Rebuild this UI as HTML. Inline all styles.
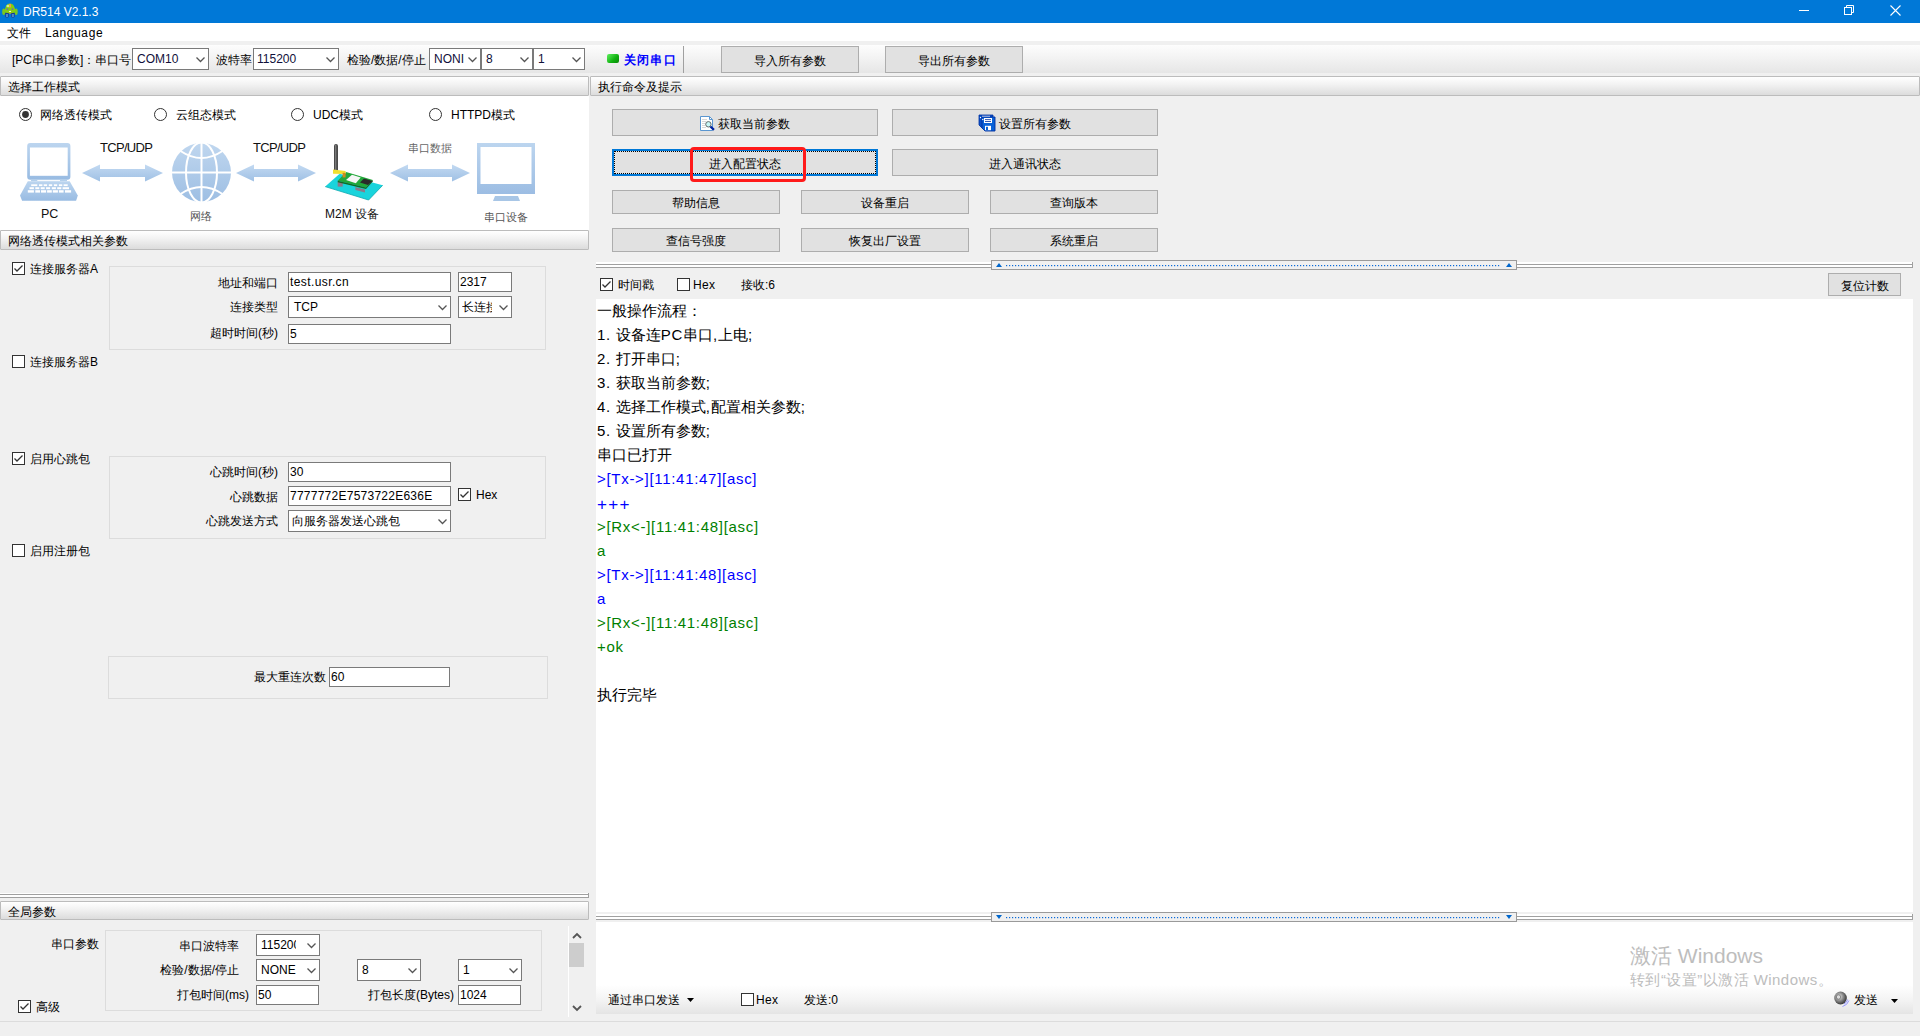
<!DOCTYPE html>
<html><head><meta charset="utf-8"><style>
html,body{margin:0;padding:0;width:1920px;height:1036px;overflow:hidden;background:#f0f0f0;}
body>div{position:absolute;box-sizing:border-box;}
.t{white-space:nowrap;font-family:"Liberation Sans",sans-serif;}
</style></head><body>
<div style="left:0px;top:0px;width:1920px;height:23px;background:#0078d7;"></div>
<svg style="position:absolute;left:0px;top:0px" width="22" height="22" viewBox="0 0 22 22">
<ellipse cx="3.7" cy="11.7" rx="1.5" ry="3.2" fill="#7ac820"/>
<ellipse cx="16.2" cy="11.7" rx="1.5" ry="3.2" fill="#7ac820"/>
<rect x="5.3" y="12.3" width="3.4" height="5.3" rx="1" fill="#1a3a90"/>
<rect x="11.2" y="12.3" width="3.4" height="5.3" rx="1" fill="#1a3a90"/>
<rect x="6" y="14" width="2" height="3" fill="#4a88c8"/><rect x="11.9" y="14" width="2" height="3" fill="#4a88c8"/>
<path d="M4.8 12.5 Q4.8 3.6 10 3.6 Q15.2 3.6 15.2 12.5 Q10 13.8 4.8 12.5 Z" fill="#84cc10"/>
<ellipse cx="8" cy="6" rx="1.6" ry="1.2" fill="#c8ec90"/>
<rect x="9.1" y="3.8" width="1.9" height="3.8" rx="0.9" fill="#f0a040"/>
<circle cx="7.4" cy="9.1" r="0.95" fill="#7060c0"/><circle cx="12.5" cy="9.1" r="0.95" fill="#7060c0"/>
<ellipse cx="10" cy="11.4" rx="1.1" ry="0.6" fill="#f0f0f0"/>
<rect x="9.2" y="12.4" width="1.6" height="1.4" fill="#d0a020"/>
</svg>
<div class="t" style="left:23px;top:6px;font-size:12px;line-height:12px;color:#fff;">DR514 V2.1.3</div>
<div style="left:1799px;top:10px;width:10px;height:1px;background:#fff;"></div>
<svg style="position:absolute;left:1844px;top:5px" width="11" height="11"><rect x="0.5" y="2.5" width="7" height="7" fill="none" stroke="#fff"/><path d="M2.5 2.5 V0.5 H9.5 V7.5 H7.5" fill="none" stroke="#fff"/></svg>
<svg style="position:absolute;left:1890px;top:5px" width="11" height="11"><path d="M0.5 0.5 L10.5 10.5 M10.5 0.5 L0.5 10.5" stroke="#fff" stroke-width="1.1"/></svg>
<div style="left:0px;top:23px;width:1920px;height:18px;background:#fff;"></div>
<div class="t" style="left:7px;top:27px;font-size:12px;line-height:12px;color:#000;">文件</div>
<div class="t" style="left:45px;top:27px;font-size:12px;line-height:12px;color:#000;letter-spacing:0.6px;">Language</div>
<div style="left:0px;top:41px;width:1920px;height:35px;background:#f0f0f0;"></div>
<div style="left:0px;top:45px;width:1920px;height:28px;background:linear-gradient(#fdfdfd,#f3f3f3 45%,#e6e6e6);"></div>
<div class="t" style="left:12px;top:54px;font-size:12px;line-height:12px;color:#000;">[PC串口参数]：串口号</div>
<div style="left:132px;top:48px;width:77px;height:22px;background:#fff;border:1px solid #7a7a7a;"></div>
<div class="t" style="left:137px;top:53px;font-size:12px;line-height:12px;color:#000;color:#10103a;">COM10</div>
<svg style="position:absolute;left:196px;top:57px" width="9" height="6"><path d="M0.5 0.5 L4.5 4.5 L8.5 0.5" fill="none" stroke="#555" stroke-width="1.25"/></svg>
<div class="t" style="left:216px;top:54px;font-size:12px;line-height:12px;color:#000;">波特率</div>
<div style="left:253px;top:48px;width:86px;height:22px;background:#fff;border:1px solid #7a7a7a;"></div>
<div class="t" style="left:257px;top:53px;font-size:12px;line-height:12px;color:#000;color:#10103a;">115200</div>
<svg style="position:absolute;left:326px;top:57px" width="9" height="6"><path d="M0.5 0.5 L4.5 4.5 L8.5 0.5" fill="none" stroke="#555" stroke-width="1.25"/></svg>
<div class="t" style="left:347px;top:54px;font-size:12px;line-height:12px;color:#000;">检验/数据/停止</div>
<div style="left:429px;top:48px;width:52px;height:22px;background:#fff;border:1px solid #7a7a7a;"></div>
<div class="t" style="left:434px;top:53px;font-size:12px;line-height:12px;color:#000;color:#10103a;">NONI</div>
<svg style="position:absolute;left:468px;top:57px" width="9" height="6"><path d="M0.5 0.5 L4.5 4.5 L8.5 0.5" fill="none" stroke="#555" stroke-width="1.25"/></svg>
<div style="left:481px;top:48px;width:52px;height:22px;background:#fff;border:1px solid #7a7a7a;"></div>
<div class="t" style="left:486px;top:53px;font-size:12px;line-height:12px;color:#000;color:#10103a;">8</div>
<svg style="position:absolute;left:520px;top:57px" width="9" height="6"><path d="M0.5 0.5 L4.5 4.5 L8.5 0.5" fill="none" stroke="#555" stroke-width="1.25"/></svg>
<div style="left:533px;top:48px;width:52px;height:22px;background:#fff;border:1px solid #7a7a7a;"></div>
<div class="t" style="left:538px;top:53px;font-size:12px;line-height:12px;color:#000;color:#10103a;">1</div>
<svg style="position:absolute;left:572px;top:57px" width="9" height="6"><path d="M0.5 0.5 L4.5 4.5 L8.5 0.5" fill="none" stroke="#555" stroke-width="1.25"/></svg>
<div style="left:607px;top:54px;width:12px;height:9px;border-radius:2px;background:linear-gradient(135deg,#5ff05f,#10b010 60%,#0a8a0a);"></div>
<div class="t" style="left:624px;top:54px;font-size:12px;line-height:12px;color:#0000ff;font-weight:bold;letter-spacing:1.2px;">关闭串口</div>
<div style="left:683px;top:46px;width:1px;height:27px;background:#a0a0a0;"></div>
<div style="left:721px;top:46px;width:138px;height:27px;background:#e1e1e1;border:1px solid #adadad;"></div>
<div class="t" style="left:721px;width:138px;top:55px;font-size:12px;line-height:12px;color:#000;text-align:center;">导入所有参数</div>
<div style="left:885px;top:46px;width:138px;height:27px;background:#e1e1e1;border:1px solid #adadad;"></div>
<div class="t" style="left:885px;width:138px;top:55px;font-size:12px;line-height:12px;color:#000;text-align:center;">导出所有参数</div>
<div style="left:0px;top:76px;width:589px;height:20px;border:1px solid #bcbcbc;border-radius:1px;background:linear-gradient(#ffffff,#f3f3f3 40%,#dcdcdc);"></div>
<div class="t" style="left:8px;top:81px;font-size:12px;line-height:12px;color:#000;">选择工作模式</div>
<div style="left:0px;top:96px;width:589px;height:134px;background:#fff;"></div>
<svg style="position:absolute;left:19px;top:108px" width="14" height="14"><circle cx="6.5" cy="6.5" r="6" fill="#fff" stroke="#333" stroke-width="1"/><circle cx="6.5" cy="6.5" r="3.4" fill="#333"/></svg>
<div class="t" style="left:40px;top:109px;font-size:12px;line-height:12px;color:#000;">网络透传模式</div>
<svg style="position:absolute;left:154px;top:108px" width="14" height="14"><circle cx="6.5" cy="6.5" r="6" fill="#fff" stroke="#333" stroke-width="1"/></svg>
<div class="t" style="left:176px;top:109px;font-size:12px;line-height:12px;color:#000;">云组态模式</div>
<svg style="position:absolute;left:291px;top:108px" width="14" height="14"><circle cx="6.5" cy="6.5" r="6" fill="#fff" stroke="#333" stroke-width="1"/></svg>
<div class="t" style="left:313px;top:109px;font-size:12px;line-height:12px;color:#000;">UDC模式</div>
<svg style="position:absolute;left:429px;top:108px" width="14" height="14"><circle cx="6.5" cy="6.5" r="6" fill="#fff" stroke="#333" stroke-width="1"/></svg>
<div class="t" style="left:451px;top:109px;font-size:12px;line-height:12px;color:#000;">HTTPD模式</div>
<svg style="position:absolute;left:20px;top:143px" width="59" height="59" viewBox="0 0 59 59">
<defs><linearGradient id="lg" x1="0" y1="0" x2="0" y2="1"><stop offset="0" stop-color="#bcd5ef"/><stop offset="1" stop-color="#98bbe2"/></linearGradient></defs>
<rect x="7.2" y="0" width="43.2" height="36.8" rx="3" fill="url(#lg)"/>
<rect x="9.9" y="4.5" width="37.8" height="28.3" fill="#fff"/>
<rect x="11" y="36.8" width="36" height="1.4" fill="#b4d0ec"/>
<rect x="17.3" y="37" width="22.7" height="0.9" fill="#fff"/>
<path d="M7.8 38.2 L49.7 38.2 L57.8 52.4 L56.1 57.8 L2.1 57.8 L0 52.4 Z" fill="url(#lg)"/>
<g fill="#fff"><rect x="11.2" y="41.3" width="6.1" height="1.8"/><rect x="19" y="41.3" width="3.4" height="1.8"/><rect x="23.7" y="41.3" width="3.4" height="1.8"/><rect x="28.8" y="41.3" width="3.4" height="1.8"/><rect x="33.9" y="41.3" width="3.3" height="1.8"/><rect x="38.9" y="41.3" width="3.4" height="1.8"/><rect x="43.6" y="41.3" width="4.1" height="1.8"/><rect x="9.5" y="44.2" width="4.4" height="2.0"/><rect x="15.3" y="44.2" width="4.0" height="2.0"/><rect x="20.7" y="44.2" width="4.0" height="2.0"/><rect x="26.1" y="44.2" width="4.0" height="2.0"/><rect x="31.8" y="44.2" width="4.1" height="2.0"/><rect x="37.2" y="44.2" width="4.1" height="2.0"/><rect x="42.6" y="44.2" width="6.4" height="2.0"/><rect x="7.8" y="47.2" width="6.1" height="2.4"/><rect x="15.3" y="47.2" width="4.7" height="2.4"/><rect x="21" y="47.2" width="5.1" height="2.4"/><rect x="27.1" y="47.2" width="4.7" height="2.4"/><rect x="32.8" y="47.2" width="5.1" height="2.4"/><rect x="38.9" y="47.2" width="4.7" height="2.4"/><rect x="45" y="47.2" width="6.1" height="2.4"/></g></svg>
<div class="t" style="left:41px;top:208px;font-size:12.5px;line-height:12.5px;color:#111;">PC</div>
<svg style="position:absolute;left:82px;top:164px" width="81" height="18" viewBox="0 0 81 18"><defs><linearGradient id="ag" x1="0" y1="0" x2="0" y2="1"><stop offset="0" stop-color="#c3daf2"/><stop offset="1" stop-color="#9fc0e4"/></linearGradient></defs><path d="M0 9 L18 0.5 L18 5 L63 5 L63 0.5 L81 9 L63 17.5 L63 13 L18 13 L18 17.5 Z" fill="url(#ag)"/></svg>
<div class="t" style="left:100px;top:141px;font-size:13px;line-height:13px;color:#111;letter-spacing:-0.7px;">TCP/UDP</div>
<svg style="position:absolute;left:171px;top:142px" width="61" height="61" viewBox="0 0 61 61">
<defs><linearGradient id="gg" x1="0" y1="0" x2="0" y2="1"><stop offset="0" stop-color="#c0d7ef"/><stop offset="1" stop-color="#9dbee3"/></linearGradient></defs>
<circle cx="30.5" cy="30.5" r="29.5" fill="url(#gg)"/>
<g fill="none" stroke="#fff" stroke-width="2">
<ellipse cx="30.5" cy="30.5" rx="15.5" ry="30"/>
<line x1="30.5" y1="0" x2="30.5" y2="61"/>
<line x1="0" y1="30.5" x2="61" y2="30.5"/>
<path d="M9.5 9 Q30.5 23 51.5 9"/>
<path d="M9.5 52 Q30.5 38 51.5 52"/>
</g></svg>
<div class="t" style="left:190px;top:211px;font-size:11px;line-height:11px;color:#555;-webkit-text-stroke-width:0;">网络</div>
<svg style="position:absolute;left:236px;top:164px" width="80" height="18" viewBox="0 0 80 18"><defs><linearGradient id="ag" x1="0" y1="0" x2="0" y2="1"><stop offset="0" stop-color="#c3daf2"/><stop offset="1" stop-color="#9fc0e4"/></linearGradient></defs><path d="M0 9 L18 0.5 L18 5 L62 5 L62 0.5 L80 9 L62 17.5 L62 13 L18 13 L18 17.5 Z" fill="url(#ag)"/></svg>
<div class="t" style="left:253px;top:141px;font-size:13px;line-height:13px;color:#111;letter-spacing:-0.7px;">TCP/UDP</div>
<svg style="position:absolute;left:322px;top:142px" width="64" height="62" viewBox="0 0 64 62">
<path d="M3.2 44.6 L46.6 58 L60.7 43.3 L17.7 31.8 Z" fill="#19d4dc"/>
<path d="M3.2 44.6 L46.6 58 L60.7 43.3" fill="none" stroke="#0aa8b0" stroke-width="0.8"/>
<rect x="15.7" y="40" width="5" height="4.6" fill="#8a7a8a"/>
<path d="M33.4 45 L43 47.5 L43 50.5 L33.4 48 Z" fill="#8a7a8a"/>
<path d="M15.7 38.7 L24.2 30.1 L50.8 38 L44 45.5 Z" fill="#22a83a"/>
<path d="M15.7 38.7 L44 45.5 L50.8 38 L50.8 39.5 L44 47 L15.7 40.2 Z" fill="#126a22"/>
<path d="M24 38 L30 32.8 L38.7 35.4 L33.8 41.3 Z" fill="#f6f6f6"/>
<path d="M38 40.5 L42 36.4 L50.5 39 L46 43 Z" fill="#2a2a2a"/>
<rect x="12" y="2" width="4" height="28" rx="2" fill="#4a4a4a"/>
<rect x="13" y="3" width="1.3" height="25" fill="#7a7a7a"/>
<path d="M11 27.5 L23.6 29 L23.6 32 L11 31.8 Z" fill="#f0e030"/>
<rect x="20.6" y="30.8" width="3" height="4.6" fill="#d08a20"/>
</svg>
<div class="t" style="left:325px;top:208px;font-size:12px;line-height:12px;color:#111;">M2M 设备</div>
<svg style="position:absolute;left:390px;top:164px" width="80" height="18" viewBox="0 0 80 18"><defs><linearGradient id="ag" x1="0" y1="0" x2="0" y2="1"><stop offset="0" stop-color="#c3daf2"/><stop offset="1" stop-color="#9fc0e4"/></linearGradient></defs><path d="M0 9 L18 0.5 L18 5 L62 5 L62 0.5 L80 9 L62 17.5 L62 13 L18 13 L18 17.5 Z" fill="url(#ag)"/></svg>
<div class="t" style="left:408px;top:143px;font-size:11px;line-height:11px;color:#666;-webkit-text-stroke-width:0;">串口数据</div>
<svg style="position:absolute;left:477px;top:143px" width="59" height="59" viewBox="0 0 59 59">
<defs><linearGradient id="mg" x1="0" y1="0" x2="0" y2="1"><stop offset="0" stop-color="#bcd5ef"/><stop offset="1" stop-color="#9cbde3"/></linearGradient></defs>
<rect x="0" y="0" width="58" height="51" fill="url(#mg)"/>
<rect x="3.5" y="4" width="51" height="37" fill="#fff"/>
<path d="M18 53 L41 53 L43 58 L16 58 Z" fill="#a8c6e6"/>
</svg>
<div class="t" style="left:484px;top:212px;font-size:11px;line-height:11px;color:#555;-webkit-text-stroke-width:0;">串口设备</div>
<div style="left:0px;top:230px;width:589px;height:20px;border:1px solid #bcbcbc;border-radius:1px;background:linear-gradient(#ffffff,#f3f3f3 40%,#dcdcdc);"></div>
<div class="t" style="left:8px;top:235px;font-size:12px;line-height:12px;color:#000;">网络透传模式相关参数</div>
<div style="left:12px;top:262px;width:13px;height:13px;background:#fff;border:1px solid #333;"></div>
<svg style="position:absolute;left:12px;top:262px" width="13" height="13"><path d="M2.5 6.5 L5 9 L10.5 3.5" fill="none" stroke="#333" stroke-width="1.3"/></svg>
<div class="t" style="left:30px;top:263px;font-size:12px;line-height:12px;color:#000;">连接服务器A</div>
<div style="left:109px;top:266px;width:437px;height:84px;border:1px solid #dcdcdc;"></div>
<div class="t" style="right:1642px;top:277px;font-size:12px;line-height:12px;color:#000;text-align:right;">地址和端口</div>
<div style="left:288px;top:272px;width:163px;height:20px;background:#fff;border:1px solid #7a7a7a;"></div>
<div class="t" style="left:290px;top:276px;font-size:12px;line-height:12px;color:#000;letter-spacing:0.4px;">test.usr.cn</div>
<div style="left:458px;top:272px;width:54px;height:20px;background:#fff;border:1px solid #7a7a7a;"></div>
<div class="t" style="left:460px;top:276px;font-size:12px;line-height:12px;color:#000;">2317</div>
<div class="t" style="right:1642px;top:301px;font-size:12px;line-height:12px;color:#000;text-align:right;">连接类型</div>
<div style="left:288px;top:296px;width:163px;height:22px;background:#fff;border:1px solid #7a7a7a;"></div>
<div class="t" style="left:294px;top:301px;font-size:12px;line-height:12px;color:#000;">TCP</div>
<svg style="position:absolute;left:438px;top:305px" width="9" height="6"><path d="M0.5 0.5 L4.5 4.5 L8.5 0.5" fill="none" stroke="#555" stroke-width="1.25"/></svg>
<div style="left:458px;top:296px;width:54px;height:22px;background:#fff;border:1px solid #7a7a7a;"></div>
<div class="t" style="left:462px;top:301px;font-size:12px;line-height:12px;color:#000;width:30px;overflow:hidden;">长连接</div>
<svg style="position:absolute;left:499px;top:305px" width="9" height="6"><path d="M0.5 0.5 L4.5 4.5 L8.5 0.5" fill="none" stroke="#555" stroke-width="1.25"/></svg>
<div class="t" style="right:1642px;top:327px;font-size:12px;line-height:12px;color:#000;text-align:right;">超时时间(秒)</div>
<div style="left:288px;top:324px;width:163px;height:20px;background:#fff;border:1px solid #7a7a7a;"></div>
<div class="t" style="left:290px;top:328px;font-size:12px;line-height:12px;color:#000;">5</div>
<div style="left:12px;top:355px;width:13px;height:13px;background:#fff;border:1px solid #333;"></div>
<div class="t" style="left:30px;top:356px;font-size:12px;line-height:12px;color:#000;">连接服务器B</div>
<div style="left:12px;top:452px;width:13px;height:13px;background:#fff;border:1px solid #333;"></div>
<svg style="position:absolute;left:12px;top:452px" width="13" height="13"><path d="M2.5 6.5 L5 9 L10.5 3.5" fill="none" stroke="#333" stroke-width="1.3"/></svg>
<div class="t" style="left:30px;top:453px;font-size:12px;line-height:12px;color:#000;">启用心跳包</div>
<div style="left:109px;top:456px;width:437px;height:83px;border:1px solid #dcdcdc;"></div>
<div class="t" style="right:1642px;top:466px;font-size:12px;line-height:12px;color:#000;text-align:right;">心跳时间(秒)</div>
<div style="left:288px;top:462px;width:163px;height:20px;background:#fff;border:1px solid #7a7a7a;"></div>
<div class="t" style="left:290px;top:466px;font-size:12px;line-height:12px;color:#000;">30</div>
<div class="t" style="right:1642px;top:491px;font-size:12px;line-height:12px;color:#000;text-align:right;">心跳数据</div>
<div style="left:288px;top:486px;width:163px;height:20px;background:#fff;border:1px solid #7a7a7a;"></div>
<div class="t" style="left:290px;top:490px;font-size:12px;line-height:12px;color:#000;letter-spacing:0.25px;">7777772E7573722E636E</div>
<div style="left:458px;top:488px;width:13px;height:13px;background:#fff;border:1px solid #333;"></div>
<svg style="position:absolute;left:458px;top:488px" width="13" height="13"><path d="M2.5 6.5 L5 9 L10.5 3.5" fill="none" stroke="#333" stroke-width="1.3"/></svg>
<div class="t" style="left:476px;top:489px;font-size:12px;line-height:12px;color:#000;">Hex</div>
<div class="t" style="right:1642px;top:515px;font-size:12px;line-height:12px;color:#000;text-align:right;">心跳发送方式</div>
<div style="left:288px;top:510px;width:163px;height:22px;background:#fff;border:1px solid #7a7a7a;"></div>
<div class="t" style="left:292px;top:515px;font-size:12px;line-height:12px;color:#000;">向服务器发送心跳包</div>
<svg style="position:absolute;left:438px;top:519px" width="9" height="6"><path d="M0.5 0.5 L4.5 4.5 L8.5 0.5" fill="none" stroke="#555" stroke-width="1.25"/></svg>
<div style="left:12px;top:544px;width:13px;height:13px;background:#fff;border:1px solid #333;"></div>
<div class="t" style="left:30px;top:545px;font-size:12px;line-height:12px;color:#000;">启用注册包</div>
<div style="left:108px;top:656px;width:440px;height:43px;border:1px solid #dcdcdc;"></div>
<div class="t" style="right:1594px;top:671px;font-size:12px;line-height:12px;color:#000;text-align:right;">最大重连次数</div>
<div style="left:329px;top:667px;width:121px;height:20px;background:#fff;border:1px solid #7a7a7a;"></div>
<div class="t" style="left:331px;top:671px;font-size:12px;line-height:12px;color:#000;">60</div>
<div style="left:0px;top:893px;width:589px;height:6px;border-top:1px solid #fff;"></div>
<div style="left:0px;top:894px;width:589px;height:1px;background:#a0a0a0;"></div>
<div style="left:0px;top:895px;width:589px;height:2px;background:#fff;"></div>
<div style="left:0px;top:897px;width:589px;height:1px;background:#a0a0a0;"></div>
<div style="left:588px;top:893px;width:1px;height:5px;background:#a0a0a0;"></div>
<div style="left:0px;top:901px;width:589px;height:19px;border:1px solid #bcbcbc;border-radius:1px;background:linear-gradient(#ffffff,#f3f3f3 40%,#dcdcdc);"></div>
<div class="t" style="left:8px;top:906px;font-size:12px;line-height:12px;color:#000;">全局参数</div>
<div class="t" style="right:1821px;top:938px;font-size:12px;line-height:12px;color:#000;text-align:right;">串口参数</div>
<div style="left:105px;top:930px;width:437px;height:81px;border:1px solid #dcdcdc;"></div>
<div class="t" style="right:1681px;top:940px;font-size:12px;line-height:12px;color:#000;text-align:right;">串口波特率</div>
<div style="left:256px;top:934px;width:64px;height:22px;background:#fff;border:1px solid #7a7a7a;"></div>
<div class="t" style="left:261px;top:939px;font-size:12px;line-height:12px;color:#000;width:35px;overflow:hidden;">115200</div>
<svg style="position:absolute;left:307px;top:943px" width="9" height="6"><path d="M0.5 0.5 L4.5 4.5 L8.5 0.5" fill="none" stroke="#555" stroke-width="1.25"/></svg>
<div class="t" style="right:1681px;top:964px;font-size:12px;line-height:12px;color:#000;text-align:right;">检验/数据/停止</div>
<div style="left:256px;top:959px;width:64px;height:22px;background:#fff;border:1px solid #7a7a7a;"></div>
<div class="t" style="left:261px;top:964px;font-size:12px;line-height:12px;color:#000;">NONE</div>
<svg style="position:absolute;left:307px;top:968px" width="9" height="6"><path d="M0.5 0.5 L4.5 4.5 L8.5 0.5" fill="none" stroke="#555" stroke-width="1.25"/></svg>
<div style="left:357px;top:959px;width:64px;height:22px;background:#fff;border:1px solid #7a7a7a;"></div>
<div class="t" style="left:362px;top:964px;font-size:12px;line-height:12px;color:#000;">8</div>
<svg style="position:absolute;left:408px;top:968px" width="9" height="6"><path d="M0.5 0.5 L4.5 4.5 L8.5 0.5" fill="none" stroke="#555" stroke-width="1.25"/></svg>
<div style="left:458px;top:959px;width:64px;height:22px;background:#fff;border:1px solid #7a7a7a;"></div>
<div class="t" style="left:463px;top:964px;font-size:12px;line-height:12px;color:#000;">1</div>
<svg style="position:absolute;left:509px;top:968px" width="9" height="6"><path d="M0.5 0.5 L4.5 4.5 L8.5 0.5" fill="none" stroke="#555" stroke-width="1.25"/></svg>
<div class="t" style="right:1671px;top:989px;font-size:12px;line-height:12px;color:#000;text-align:right;">打包时间(ms)</div>
<div style="left:256px;top:985px;width:63px;height:20px;background:#fff;border:1px solid #7a7a7a;"></div>
<div class="t" style="left:258px;top:989px;font-size:12px;line-height:12px;color:#000;">50</div>
<div class="t" style="right:1466px;top:989px;font-size:12px;line-height:12px;color:#000;text-align:right;">打包长度(Bytes)</div>
<div style="left:458px;top:985px;width:63px;height:20px;background:#fff;border:1px solid #7a7a7a;"></div>
<div class="t" style="left:460px;top:989px;font-size:12px;line-height:12px;color:#000;">1024</div>
<div style="left:18px;top:1000px;width:13px;height:13px;background:#fff;border:1px solid #333;"></div>
<svg style="position:absolute;left:18px;top:1000px" width="13" height="13"><path d="M2.5 6.5 L5 9 L10.5 3.5" fill="none" stroke="#333" stroke-width="1.3"/></svg>
<div class="t" style="left:36px;top:1001px;font-size:12px;line-height:12px;color:#000;">高级</div>
<div style="left:568px;top:926px;width:1px;height:91px;background:#fff;"></div>
<svg style="position:absolute;left:570px;top:931px" width="14" height="9"><path d="M3 7 L7 3 L11 7" fill="none" stroke="#555" stroke-width="1.8"/></svg>
<div style="left:569px;top:943px;width:15px;height:24px;background:#cdcdcd;"></div>
<svg style="position:absolute;left:570px;top:1004px" width="14" height="9"><path d="M3 2 L7 6 L11 2" fill="none" stroke="#555" stroke-width="1.8"/></svg>
<div style="left:0px;top:1021px;width:1920px;height:1px;background:#dcdcdc;"></div>
<div style="left:590px;top:76px;width:1330px;height:20px;border:1px solid #bcbcbc;border-radius:1px;background:linear-gradient(#ffffff,#f3f3f3 40%,#dcdcdc);"></div>
<div class="t" style="left:598px;top:81px;font-size:12px;line-height:12px;color:#000;">执行命令及提示</div>
<div style="left:612px;top:109px;width:266px;height:27px;background:#e1e1e1;border:1px solid #adadad;"></div>
<svg style="position:absolute;left:700px;top:116px" width="17" height="16" viewBox="0 0 17 16">
<path d="M0.5 0.5 H9.5 L12.5 3.5 V14.5 H0.5 Z" fill="#fff" stroke="#5a96d0" stroke-width="1"/>
<path d="M9.5 0.5 V3.5 H12.5" fill="none" stroke="#5a96d0" stroke-width="1"/>
<g stroke="#d4d4d4" stroke-width="0.9"><line x1="2" y1="3.5" x2="7" y2="3.5"/><line x1="2" y1="5.5" x2="6" y2="5.5"/><line x1="2" y1="7.5" x2="5" y2="7.5"/><line x1="2" y1="9.5" x2="5" y2="9.5"/><line x1="2" y1="11.5" x2="6" y2="11.5"/></g>
<circle cx="8.4" cy="8.3" r="2.7" fill="#c8f8f8" stroke="#606868" stroke-width="1"/>
<line x1="10.4" y1="10.5" x2="14" y2="13.8" stroke="#0022a0" stroke-width="2.3"/>
</svg>
<div class="t" style="left:718px;top:118px;font-size:12px;line-height:12px;color:#000;">获取当前参数</div>
<div style="left:892px;top:109px;width:266px;height:27px;background:#e1e1e1;border:1px solid #adadad;"></div>
<svg style="position:absolute;left:975px;top:110px" width="25" height="25" viewBox="0 0 25 25">
<path d="M4 5 H18 V18 H7 L4 15 Z" fill="#0a50c8" stroke="#0030a0" stroke-width="0.8"/>
<rect x="7" y="5.8" width="8" height="1.2" fill="#fff"/>
<circle cx="5.5" cy="7.5" r="0.7" fill="#fff"/>
<path d="M7 7 H20 V21 H10 L7 18 Z" fill="#0a62d8" stroke="#0030a0" stroke-width="0.9"/>
<circle cx="7.8" cy="9.5" r="0.7" fill="#fff"/>
<rect x="9" y="8" width="8" height="5" fill="#fff"/>
<g stroke="#0030a0" stroke-width="0.8"><line x1="10" y1="9.6" x2="16" y2="9.6"/><line x1="10" y1="11.5" x2="16" y2="11.5"/></g>
<rect x="10" y="15.8" width="6" height="4.4" fill="#fff"/>
<rect x="11" y="16.8" width="2" height="3.4" fill="#0a62d8"/>
</svg>
<div class="t" style="left:999px;top:118px;font-size:12px;line-height:12px;color:#000;">设置所有参数</div>
<div style="left:612px;top:149px;width:266px;height:27px;background:#e1e1e1;border:2px solid #0078d7;"></div>
<div style="left:614px;top:151px;width:262px;height:23px;border:1px dotted #000;"></div>
<div class="t" style="left:612px;width:266px;top:158px;font-size:12px;line-height:12px;color:#000;text-align:center;">进入配置状态</div>
<div style="left:892px;top:149px;width:266px;height:27px;background:#e1e1e1;border:1px solid #adadad;"></div>
<div class="t" style="left:892px;width:266px;top:158px;font-size:12px;line-height:12px;color:#000;text-align:center;">进入通讯状态</div>
<div style="left:612px;top:190px;width:168px;height:24px;background:#e1e1e1;border:1px solid #adadad;"></div>
<div class="t" style="left:612px;width:168px;top:197px;font-size:12px;line-height:12px;color:#000;text-align:center;">帮助信息</div>
<div style="left:801px;top:190px;width:168px;height:24px;background:#e1e1e1;border:1px solid #adadad;"></div>
<div class="t" style="left:801px;width:168px;top:197px;font-size:12px;line-height:12px;color:#000;text-align:center;">设备重启</div>
<div style="left:990px;top:190px;width:168px;height:24px;background:#e1e1e1;border:1px solid #adadad;"></div>
<div class="t" style="left:990px;width:168px;top:197px;font-size:12px;line-height:12px;color:#000;text-align:center;">查询版本</div>
<div style="left:612px;top:228px;width:168px;height:24px;background:#e1e1e1;border:1px solid #adadad;"></div>
<div class="t" style="left:612px;width:168px;top:235px;font-size:12px;line-height:12px;color:#000;text-align:center;">查信号强度</div>
<div style="left:801px;top:228px;width:168px;height:24px;background:#e1e1e1;border:1px solid #adadad;"></div>
<div class="t" style="left:801px;width:168px;top:235px;font-size:12px;line-height:12px;color:#000;text-align:center;">恢复出厂设置</div>
<div style="left:990px;top:228px;width:168px;height:24px;background:#e1e1e1;border:1px solid #adadad;"></div>
<div class="t" style="left:990px;width:168px;top:235px;font-size:12px;line-height:12px;color:#000;text-align:center;">系统重启</div>
<div style="left:690px;top:147px;width:116px;height:35px;border:3px solid #ff1a1a;border-radius:4px;"></div>
<div style="left:596px;top:262px;width:1317px;height:2px;background:#fff;"></div>
<div style="left:596px;top:264px;width:1317px;height:1px;background:#a0a0a0;"></div>
<div style="left:596px;top:265px;width:1317px;height:2px;background:#fff;"></div>
<div style="left:596px;top:267px;width:1317px;height:1px;background:#a0a0a0;"></div>
<div style="left:1912px;top:262px;width:1px;height:6px;background:#a0a0a0;"></div>
<div style="left:991px;top:260px;width:526px;height:10px;background:#f0f0f0;border:1px solid #9a9a9a;"></div>
<svg style="position:absolute;left:996px;top:263px" width="7" height="5"><path d="M0 4 L3 0 L6 4 Z" fill="#0066cc"/></svg>
<svg style="position:absolute;left:1506px;top:263px" width="7" height="5"><path d="M0 4 L3 0 L6 4 Z" fill="#0066cc"/></svg>
<svg style="position:absolute;left:1006px;top:265px" width="496" height="2"><g fill="#0a6ad8"><rect x="0" y="0" width="1.2" height="1.2"/><rect x="3" y="0" width="1.2" height="1.2"/><rect x="6" y="0" width="1.2" height="1.2"/><rect x="9" y="0" width="1.2" height="1.2"/><rect x="12" y="0" width="1.2" height="1.2"/><rect x="15" y="0" width="1.2" height="1.2"/><rect x="18" y="0" width="1.2" height="1.2"/><rect x="21" y="0" width="1.2" height="1.2"/><rect x="24" y="0" width="1.2" height="1.2"/><rect x="27" y="0" width="1.2" height="1.2"/><rect x="30" y="0" width="1.2" height="1.2"/><rect x="33" y="0" width="1.2" height="1.2"/><rect x="36" y="0" width="1.2" height="1.2"/><rect x="39" y="0" width="1.2" height="1.2"/><rect x="42" y="0" width="1.2" height="1.2"/><rect x="45" y="0" width="1.2" height="1.2"/><rect x="48" y="0" width="1.2" height="1.2"/><rect x="51" y="0" width="1.2" height="1.2"/><rect x="54" y="0" width="1.2" height="1.2"/><rect x="57" y="0" width="1.2" height="1.2"/><rect x="60" y="0" width="1.2" height="1.2"/><rect x="63" y="0" width="1.2" height="1.2"/><rect x="66" y="0" width="1.2" height="1.2"/><rect x="69" y="0" width="1.2" height="1.2"/><rect x="72" y="0" width="1.2" height="1.2"/><rect x="75" y="0" width="1.2" height="1.2"/><rect x="78" y="0" width="1.2" height="1.2"/><rect x="81" y="0" width="1.2" height="1.2"/><rect x="84" y="0" width="1.2" height="1.2"/><rect x="87" y="0" width="1.2" height="1.2"/><rect x="90" y="0" width="1.2" height="1.2"/><rect x="93" y="0" width="1.2" height="1.2"/><rect x="96" y="0" width="1.2" height="1.2"/><rect x="99" y="0" width="1.2" height="1.2"/><rect x="102" y="0" width="1.2" height="1.2"/><rect x="105" y="0" width="1.2" height="1.2"/><rect x="108" y="0" width="1.2" height="1.2"/><rect x="111" y="0" width="1.2" height="1.2"/><rect x="114" y="0" width="1.2" height="1.2"/><rect x="117" y="0" width="1.2" height="1.2"/><rect x="120" y="0" width="1.2" height="1.2"/><rect x="123" y="0" width="1.2" height="1.2"/><rect x="126" y="0" width="1.2" height="1.2"/><rect x="129" y="0" width="1.2" height="1.2"/><rect x="132" y="0" width="1.2" height="1.2"/><rect x="135" y="0" width="1.2" height="1.2"/><rect x="138" y="0" width="1.2" height="1.2"/><rect x="141" y="0" width="1.2" height="1.2"/><rect x="144" y="0" width="1.2" height="1.2"/><rect x="147" y="0" width="1.2" height="1.2"/><rect x="150" y="0" width="1.2" height="1.2"/><rect x="153" y="0" width="1.2" height="1.2"/><rect x="156" y="0" width="1.2" height="1.2"/><rect x="159" y="0" width="1.2" height="1.2"/><rect x="162" y="0" width="1.2" height="1.2"/><rect x="165" y="0" width="1.2" height="1.2"/><rect x="168" y="0" width="1.2" height="1.2"/><rect x="171" y="0" width="1.2" height="1.2"/><rect x="174" y="0" width="1.2" height="1.2"/><rect x="177" y="0" width="1.2" height="1.2"/><rect x="180" y="0" width="1.2" height="1.2"/><rect x="183" y="0" width="1.2" height="1.2"/><rect x="186" y="0" width="1.2" height="1.2"/><rect x="189" y="0" width="1.2" height="1.2"/><rect x="192" y="0" width="1.2" height="1.2"/><rect x="195" y="0" width="1.2" height="1.2"/><rect x="198" y="0" width="1.2" height="1.2"/><rect x="201" y="0" width="1.2" height="1.2"/><rect x="204" y="0" width="1.2" height="1.2"/><rect x="207" y="0" width="1.2" height="1.2"/><rect x="210" y="0" width="1.2" height="1.2"/><rect x="213" y="0" width="1.2" height="1.2"/><rect x="216" y="0" width="1.2" height="1.2"/><rect x="219" y="0" width="1.2" height="1.2"/><rect x="222" y="0" width="1.2" height="1.2"/><rect x="225" y="0" width="1.2" height="1.2"/><rect x="228" y="0" width="1.2" height="1.2"/><rect x="231" y="0" width="1.2" height="1.2"/><rect x="234" y="0" width="1.2" height="1.2"/><rect x="237" y="0" width="1.2" height="1.2"/><rect x="240" y="0" width="1.2" height="1.2"/><rect x="243" y="0" width="1.2" height="1.2"/><rect x="246" y="0" width="1.2" height="1.2"/><rect x="249" y="0" width="1.2" height="1.2"/><rect x="252" y="0" width="1.2" height="1.2"/><rect x="255" y="0" width="1.2" height="1.2"/><rect x="258" y="0" width="1.2" height="1.2"/><rect x="261" y="0" width="1.2" height="1.2"/><rect x="264" y="0" width="1.2" height="1.2"/><rect x="267" y="0" width="1.2" height="1.2"/><rect x="270" y="0" width="1.2" height="1.2"/><rect x="273" y="0" width="1.2" height="1.2"/><rect x="276" y="0" width="1.2" height="1.2"/><rect x="279" y="0" width="1.2" height="1.2"/><rect x="282" y="0" width="1.2" height="1.2"/><rect x="285" y="0" width="1.2" height="1.2"/><rect x="288" y="0" width="1.2" height="1.2"/><rect x="291" y="0" width="1.2" height="1.2"/><rect x="294" y="0" width="1.2" height="1.2"/><rect x="297" y="0" width="1.2" height="1.2"/><rect x="300" y="0" width="1.2" height="1.2"/><rect x="303" y="0" width="1.2" height="1.2"/><rect x="306" y="0" width="1.2" height="1.2"/><rect x="309" y="0" width="1.2" height="1.2"/><rect x="312" y="0" width="1.2" height="1.2"/><rect x="315" y="0" width="1.2" height="1.2"/><rect x="318" y="0" width="1.2" height="1.2"/><rect x="321" y="0" width="1.2" height="1.2"/><rect x="324" y="0" width="1.2" height="1.2"/><rect x="327" y="0" width="1.2" height="1.2"/><rect x="330" y="0" width="1.2" height="1.2"/><rect x="333" y="0" width="1.2" height="1.2"/><rect x="336" y="0" width="1.2" height="1.2"/><rect x="339" y="0" width="1.2" height="1.2"/><rect x="342" y="0" width="1.2" height="1.2"/><rect x="345" y="0" width="1.2" height="1.2"/><rect x="348" y="0" width="1.2" height="1.2"/><rect x="351" y="0" width="1.2" height="1.2"/><rect x="354" y="0" width="1.2" height="1.2"/><rect x="357" y="0" width="1.2" height="1.2"/><rect x="360" y="0" width="1.2" height="1.2"/><rect x="363" y="0" width="1.2" height="1.2"/><rect x="366" y="0" width="1.2" height="1.2"/><rect x="369" y="0" width="1.2" height="1.2"/><rect x="372" y="0" width="1.2" height="1.2"/><rect x="375" y="0" width="1.2" height="1.2"/><rect x="378" y="0" width="1.2" height="1.2"/><rect x="381" y="0" width="1.2" height="1.2"/><rect x="384" y="0" width="1.2" height="1.2"/><rect x="387" y="0" width="1.2" height="1.2"/><rect x="390" y="0" width="1.2" height="1.2"/><rect x="393" y="0" width="1.2" height="1.2"/><rect x="396" y="0" width="1.2" height="1.2"/><rect x="399" y="0" width="1.2" height="1.2"/><rect x="402" y="0" width="1.2" height="1.2"/><rect x="405" y="0" width="1.2" height="1.2"/><rect x="408" y="0" width="1.2" height="1.2"/><rect x="411" y="0" width="1.2" height="1.2"/><rect x="414" y="0" width="1.2" height="1.2"/><rect x="417" y="0" width="1.2" height="1.2"/><rect x="420" y="0" width="1.2" height="1.2"/><rect x="423" y="0" width="1.2" height="1.2"/><rect x="426" y="0" width="1.2" height="1.2"/><rect x="429" y="0" width="1.2" height="1.2"/><rect x="432" y="0" width="1.2" height="1.2"/><rect x="435" y="0" width="1.2" height="1.2"/><rect x="438" y="0" width="1.2" height="1.2"/><rect x="441" y="0" width="1.2" height="1.2"/><rect x="444" y="0" width="1.2" height="1.2"/><rect x="447" y="0" width="1.2" height="1.2"/><rect x="450" y="0" width="1.2" height="1.2"/><rect x="453" y="0" width="1.2" height="1.2"/><rect x="456" y="0" width="1.2" height="1.2"/><rect x="459" y="0" width="1.2" height="1.2"/><rect x="462" y="0" width="1.2" height="1.2"/><rect x="465" y="0" width="1.2" height="1.2"/><rect x="468" y="0" width="1.2" height="1.2"/><rect x="471" y="0" width="1.2" height="1.2"/><rect x="474" y="0" width="1.2" height="1.2"/><rect x="477" y="0" width="1.2" height="1.2"/><rect x="480" y="0" width="1.2" height="1.2"/><rect x="483" y="0" width="1.2" height="1.2"/><rect x="486" y="0" width="1.2" height="1.2"/><rect x="489" y="0" width="1.2" height="1.2"/><rect x="492" y="0" width="1.2" height="1.2"/></g></svg>
<div style="left:600px;top:278px;width:13px;height:13px;background:#fff;border:1px solid #333;"></div>
<svg style="position:absolute;left:600px;top:278px" width="13" height="13"><path d="M2.5 6.5 L5 9 L10.5 3.5" fill="none" stroke="#333" stroke-width="1.3"/></svg>
<div class="t" style="left:618px;top:279px;font-size:12px;line-height:12px;color:#000;">时间戳</div>
<div style="left:677px;top:278px;width:13px;height:13px;background:#fff;border:1px solid #333;"></div>
<div class="t" style="left:693px;top:279px;font-size:12px;line-height:12px;color:#000;letter-spacing:0.3px;">Hex</div>
<div class="t" style="left:741px;top:279px;font-size:12px;line-height:12px;color:#000;">接收:6</div>
<div style="left:1828px;top:273px;width:73px;height:23px;background:#e1e1e1;border:1px solid #adadad;"></div>
<div class="t" style="left:1828px;width:73px;top:280px;font-size:12px;line-height:12px;color:#000;text-align:center;">复位计数</div>
<div style="left:596px;top:299px;width:1317px;height:613px;background:#fff;"></div>
<div class="t" style="left:597px;top:303px;font-size:15px;line-height:15px;color:#000;">一般操作流程：</div>
<div class="t" style="left:597px;top:327px;font-size:15px;line-height:15px;color:#000;"><span style="letter-spacing:0.7px">1. </span>设备连<span style="letter-spacing:0.7px">PC</span>串口<span style="letter-spacing:0.7px">,</span>上电<span style="letter-spacing:0.7px">;</span></div>
<div class="t" style="left:597px;top:351px;font-size:15px;line-height:15px;color:#000;"><span style="letter-spacing:0.7px">2. </span>打开串口<span style="letter-spacing:0.7px">;</span></div>
<div class="t" style="left:597px;top:375px;font-size:15px;line-height:15px;color:#000;"><span style="letter-spacing:0.7px">3. </span>获取当前参数<span style="letter-spacing:0.7px">;</span></div>
<div class="t" style="left:597px;top:399px;font-size:15px;line-height:15px;color:#000;"><span style="letter-spacing:0.7px">4. </span>选择工作模式<span style="letter-spacing:0.7px">,</span>配置相关参数<span style="letter-spacing:0.7px">;</span></div>
<div class="t" style="left:597px;top:423px;font-size:15px;line-height:15px;color:#000;"><span style="letter-spacing:0.7px">5. </span>设置所有参数<span style="letter-spacing:0.7px">;</span></div>
<div class="t" style="left:597px;top:447px;font-size:15px;line-height:15px;color:#000;">串口已打开</div>
<div class="t" style="left:597px;top:471px;font-size:15px;line-height:15px;color:#0000ff;"><span style="letter-spacing:0.7px">&gt;[Tx-&gt;][11:41:47][asc]</span></div>
<div class="t" style="left:597px;top:495px;font-size:15px;line-height:15px;color:#0000ff;"><span style="letter-spacing:1.3px;font-size:17px;position:relative;top:2px">+++</span></div>
<div class="t" style="left:597px;top:519px;font-size:15px;line-height:15px;color:#008000;"><span style="letter-spacing:0.7px">&gt;[Rx&lt;-][11:41:48][asc]</span></div>
<div class="t" style="left:597px;top:543px;font-size:15px;line-height:15px;color:#008000;"><span style="letter-spacing:0.7px">a</span></div>
<div class="t" style="left:597px;top:567px;font-size:15px;line-height:15px;color:#0000ff;"><span style="letter-spacing:0.7px">&gt;[Tx-&gt;][11:41:48][asc]</span></div>
<div class="t" style="left:597px;top:591px;font-size:15px;line-height:15px;color:#0000ff;"><span style="letter-spacing:0.7px">a</span></div>
<div class="t" style="left:597px;top:615px;font-size:15px;line-height:15px;color:#008000;"><span style="letter-spacing:0.7px">&gt;[Rx&lt;-][11:41:48][asc]</span></div>
<div class="t" style="left:597px;top:639px;font-size:15px;line-height:15px;color:#008000;"><span style="letter-spacing:0.7px">+ok</span></div>
<div class="t" style="left:597px;top:687px;font-size:15px;line-height:15px;color:#000;">执行完毕</div>
<div style="left:596px;top:912px;width:1317px;height:10px;background:#f0f0f0;"></div>
<div style="left:596px;top:914px;width:1317px;height:2px;background:#fff;"></div>
<div style="left:596px;top:916px;width:1317px;height:1px;background:#a0a0a0;"></div>
<div style="left:596px;top:917px;width:1317px;height:2px;background:#fff;"></div>
<div style="left:596px;top:919px;width:1317px;height:1px;background:#a0a0a0;"></div>
<div style="left:1912px;top:914px;width:1px;height:6px;background:#a0a0a0;"></div>
<div style="left:991px;top:912px;width:526px;height:10px;background:#f0f0f0;border:1px solid #9a9a9a;"></div>
<svg style="position:absolute;left:996px;top:915px" width="7" height="5"><path d="M0 0 L6 0 L3 4 Z" fill="#0066cc"/></svg>
<svg style="position:absolute;left:1506px;top:915px" width="7" height="5"><path d="M0 0 L6 0 L3 4 Z" fill="#0066cc"/></svg>
<svg style="position:absolute;left:1006px;top:917px" width="496" height="2"><g fill="#0a6ad8"><rect x="0" y="0" width="1.2" height="1.2"/><rect x="3" y="0" width="1.2" height="1.2"/><rect x="6" y="0" width="1.2" height="1.2"/><rect x="9" y="0" width="1.2" height="1.2"/><rect x="12" y="0" width="1.2" height="1.2"/><rect x="15" y="0" width="1.2" height="1.2"/><rect x="18" y="0" width="1.2" height="1.2"/><rect x="21" y="0" width="1.2" height="1.2"/><rect x="24" y="0" width="1.2" height="1.2"/><rect x="27" y="0" width="1.2" height="1.2"/><rect x="30" y="0" width="1.2" height="1.2"/><rect x="33" y="0" width="1.2" height="1.2"/><rect x="36" y="0" width="1.2" height="1.2"/><rect x="39" y="0" width="1.2" height="1.2"/><rect x="42" y="0" width="1.2" height="1.2"/><rect x="45" y="0" width="1.2" height="1.2"/><rect x="48" y="0" width="1.2" height="1.2"/><rect x="51" y="0" width="1.2" height="1.2"/><rect x="54" y="0" width="1.2" height="1.2"/><rect x="57" y="0" width="1.2" height="1.2"/><rect x="60" y="0" width="1.2" height="1.2"/><rect x="63" y="0" width="1.2" height="1.2"/><rect x="66" y="0" width="1.2" height="1.2"/><rect x="69" y="0" width="1.2" height="1.2"/><rect x="72" y="0" width="1.2" height="1.2"/><rect x="75" y="0" width="1.2" height="1.2"/><rect x="78" y="0" width="1.2" height="1.2"/><rect x="81" y="0" width="1.2" height="1.2"/><rect x="84" y="0" width="1.2" height="1.2"/><rect x="87" y="0" width="1.2" height="1.2"/><rect x="90" y="0" width="1.2" height="1.2"/><rect x="93" y="0" width="1.2" height="1.2"/><rect x="96" y="0" width="1.2" height="1.2"/><rect x="99" y="0" width="1.2" height="1.2"/><rect x="102" y="0" width="1.2" height="1.2"/><rect x="105" y="0" width="1.2" height="1.2"/><rect x="108" y="0" width="1.2" height="1.2"/><rect x="111" y="0" width="1.2" height="1.2"/><rect x="114" y="0" width="1.2" height="1.2"/><rect x="117" y="0" width="1.2" height="1.2"/><rect x="120" y="0" width="1.2" height="1.2"/><rect x="123" y="0" width="1.2" height="1.2"/><rect x="126" y="0" width="1.2" height="1.2"/><rect x="129" y="0" width="1.2" height="1.2"/><rect x="132" y="0" width="1.2" height="1.2"/><rect x="135" y="0" width="1.2" height="1.2"/><rect x="138" y="0" width="1.2" height="1.2"/><rect x="141" y="0" width="1.2" height="1.2"/><rect x="144" y="0" width="1.2" height="1.2"/><rect x="147" y="0" width="1.2" height="1.2"/><rect x="150" y="0" width="1.2" height="1.2"/><rect x="153" y="0" width="1.2" height="1.2"/><rect x="156" y="0" width="1.2" height="1.2"/><rect x="159" y="0" width="1.2" height="1.2"/><rect x="162" y="0" width="1.2" height="1.2"/><rect x="165" y="0" width="1.2" height="1.2"/><rect x="168" y="0" width="1.2" height="1.2"/><rect x="171" y="0" width="1.2" height="1.2"/><rect x="174" y="0" width="1.2" height="1.2"/><rect x="177" y="0" width="1.2" height="1.2"/><rect x="180" y="0" width="1.2" height="1.2"/><rect x="183" y="0" width="1.2" height="1.2"/><rect x="186" y="0" width="1.2" height="1.2"/><rect x="189" y="0" width="1.2" height="1.2"/><rect x="192" y="0" width="1.2" height="1.2"/><rect x="195" y="0" width="1.2" height="1.2"/><rect x="198" y="0" width="1.2" height="1.2"/><rect x="201" y="0" width="1.2" height="1.2"/><rect x="204" y="0" width="1.2" height="1.2"/><rect x="207" y="0" width="1.2" height="1.2"/><rect x="210" y="0" width="1.2" height="1.2"/><rect x="213" y="0" width="1.2" height="1.2"/><rect x="216" y="0" width="1.2" height="1.2"/><rect x="219" y="0" width="1.2" height="1.2"/><rect x="222" y="0" width="1.2" height="1.2"/><rect x="225" y="0" width="1.2" height="1.2"/><rect x="228" y="0" width="1.2" height="1.2"/><rect x="231" y="0" width="1.2" height="1.2"/><rect x="234" y="0" width="1.2" height="1.2"/><rect x="237" y="0" width="1.2" height="1.2"/><rect x="240" y="0" width="1.2" height="1.2"/><rect x="243" y="0" width="1.2" height="1.2"/><rect x="246" y="0" width="1.2" height="1.2"/><rect x="249" y="0" width="1.2" height="1.2"/><rect x="252" y="0" width="1.2" height="1.2"/><rect x="255" y="0" width="1.2" height="1.2"/><rect x="258" y="0" width="1.2" height="1.2"/><rect x="261" y="0" width="1.2" height="1.2"/><rect x="264" y="0" width="1.2" height="1.2"/><rect x="267" y="0" width="1.2" height="1.2"/><rect x="270" y="0" width="1.2" height="1.2"/><rect x="273" y="0" width="1.2" height="1.2"/><rect x="276" y="0" width="1.2" height="1.2"/><rect x="279" y="0" width="1.2" height="1.2"/><rect x="282" y="0" width="1.2" height="1.2"/><rect x="285" y="0" width="1.2" height="1.2"/><rect x="288" y="0" width="1.2" height="1.2"/><rect x="291" y="0" width="1.2" height="1.2"/><rect x="294" y="0" width="1.2" height="1.2"/><rect x="297" y="0" width="1.2" height="1.2"/><rect x="300" y="0" width="1.2" height="1.2"/><rect x="303" y="0" width="1.2" height="1.2"/><rect x="306" y="0" width="1.2" height="1.2"/><rect x="309" y="0" width="1.2" height="1.2"/><rect x="312" y="0" width="1.2" height="1.2"/><rect x="315" y="0" width="1.2" height="1.2"/><rect x="318" y="0" width="1.2" height="1.2"/><rect x="321" y="0" width="1.2" height="1.2"/><rect x="324" y="0" width="1.2" height="1.2"/><rect x="327" y="0" width="1.2" height="1.2"/><rect x="330" y="0" width="1.2" height="1.2"/><rect x="333" y="0" width="1.2" height="1.2"/><rect x="336" y="0" width="1.2" height="1.2"/><rect x="339" y="0" width="1.2" height="1.2"/><rect x="342" y="0" width="1.2" height="1.2"/><rect x="345" y="0" width="1.2" height="1.2"/><rect x="348" y="0" width="1.2" height="1.2"/><rect x="351" y="0" width="1.2" height="1.2"/><rect x="354" y="0" width="1.2" height="1.2"/><rect x="357" y="0" width="1.2" height="1.2"/><rect x="360" y="0" width="1.2" height="1.2"/><rect x="363" y="0" width="1.2" height="1.2"/><rect x="366" y="0" width="1.2" height="1.2"/><rect x="369" y="0" width="1.2" height="1.2"/><rect x="372" y="0" width="1.2" height="1.2"/><rect x="375" y="0" width="1.2" height="1.2"/><rect x="378" y="0" width="1.2" height="1.2"/><rect x="381" y="0" width="1.2" height="1.2"/><rect x="384" y="0" width="1.2" height="1.2"/><rect x="387" y="0" width="1.2" height="1.2"/><rect x="390" y="0" width="1.2" height="1.2"/><rect x="393" y="0" width="1.2" height="1.2"/><rect x="396" y="0" width="1.2" height="1.2"/><rect x="399" y="0" width="1.2" height="1.2"/><rect x="402" y="0" width="1.2" height="1.2"/><rect x="405" y="0" width="1.2" height="1.2"/><rect x="408" y="0" width="1.2" height="1.2"/><rect x="411" y="0" width="1.2" height="1.2"/><rect x="414" y="0" width="1.2" height="1.2"/><rect x="417" y="0" width="1.2" height="1.2"/><rect x="420" y="0" width="1.2" height="1.2"/><rect x="423" y="0" width="1.2" height="1.2"/><rect x="426" y="0" width="1.2" height="1.2"/><rect x="429" y="0" width="1.2" height="1.2"/><rect x="432" y="0" width="1.2" height="1.2"/><rect x="435" y="0" width="1.2" height="1.2"/><rect x="438" y="0" width="1.2" height="1.2"/><rect x="441" y="0" width="1.2" height="1.2"/><rect x="444" y="0" width="1.2" height="1.2"/><rect x="447" y="0" width="1.2" height="1.2"/><rect x="450" y="0" width="1.2" height="1.2"/><rect x="453" y="0" width="1.2" height="1.2"/><rect x="456" y="0" width="1.2" height="1.2"/><rect x="459" y="0" width="1.2" height="1.2"/><rect x="462" y="0" width="1.2" height="1.2"/><rect x="465" y="0" width="1.2" height="1.2"/><rect x="468" y="0" width="1.2" height="1.2"/><rect x="471" y="0" width="1.2" height="1.2"/><rect x="474" y="0" width="1.2" height="1.2"/><rect x="477" y="0" width="1.2" height="1.2"/><rect x="480" y="0" width="1.2" height="1.2"/><rect x="483" y="0" width="1.2" height="1.2"/><rect x="486" y="0" width="1.2" height="1.2"/><rect x="489" y="0" width="1.2" height="1.2"/><rect x="492" y="0" width="1.2" height="1.2"/></g></svg>
<div style="left:596px;top:922px;width:1317px;height:63px;background:#fff;"></div>
<div style="left:596px;top:985px;width:1317px;height:29px;background:linear-gradient(#ffffff,#f4f4f4 50%,#e4e4e4);"></div>
<div class="t" style="left:608px;top:994px;font-size:12px;line-height:12px;color:#000;">通过串口发送</div>
<svg style="position:absolute;left:687px;top:998px" width="7" height="4"><path d="M0 0 L7 0 L3.5 4 Z" fill="#000"/></svg>
<div style="left:741px;top:993px;width:13px;height:13px;background:#fff;border:1px solid #333;"></div>
<div class="t" style="left:756px;top:994px;font-size:12px;line-height:12px;color:#000;letter-spacing:0.3px;">Hex</div>
<div class="t" style="left:804px;top:994px;font-size:12px;line-height:12px;color:#000;">发送:0</div>
<svg style="position:absolute;left:1833px;top:991px" width="18" height="17" viewBox="0 0 18 17">
<defs><radialGradient id="sp" cx="0.4" cy="0.4" r="0.6"><stop offset="0" stop-color="#f4f4f4"/><stop offset="0.45" stop-color="#9a9a9a"/><stop offset="1" stop-color="#3a3a3a"/></radialGradient></defs>
<ellipse cx="7.5" cy="7" rx="6.3" ry="6.5" fill="url(#sp)"/>
<circle cx="5.5" cy="6" r="2.2" fill="#dcdcdc" stroke="#555" stroke-width="0.6"/>
<path d="M9.5 15.5 Q14.5 14 16 9.5 M11 13 Q14 11.5 14.6 8.5" fill="none" stroke="#8a8cff" stroke-width="0.9"/>
</svg>
<div class="t" style="left:1854px;top:994px;font-size:12px;line-height:12px;color:#000;">发送</div>
<svg style="position:absolute;left:1891px;top:999px" width="7" height="4"><path d="M0 0 L7 0 L3.5 4 Z" fill="#000"/></svg>
<div class="t" style="left:1630px;top:945px;font-size:21px;line-height:21px;color:#bdbdbd;-webkit-text-stroke-width:0;">激活 Windows</div>
<div class="t" style="left:1630px;top:972px;font-size:15px;line-height:15px;color:#bdbdbd;-webkit-text-stroke-width:0;letter-spacing:0.45px;">转到“设置”以激活 Windows。</div>
</body></html>
